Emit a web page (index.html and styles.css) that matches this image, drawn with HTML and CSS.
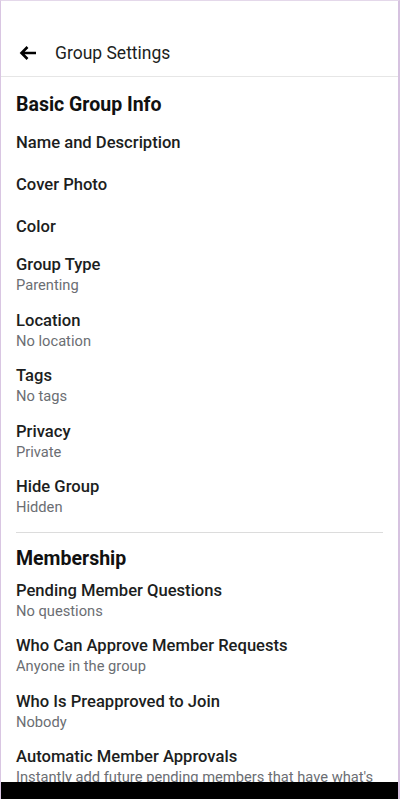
FILE: index.html
```html
<!DOCTYPE html>
<html>
<head>
<meta charset="utf-8">
<link rel="stylesheet" href="styles.css">
</head>
<body>
<div class="frame">
  <header class="topbar">
    <svg class="back" width="18" height="16" viewBox="0 0 18 16" aria-hidden="true">
      <path d="M17 8H3M8.5 2L2.5 8l6 6" fill="none" stroke="#000" stroke-width="2.6" stroke-linecap="butt" stroke-linejoin="miter"/>
    </svg>
    <span class="title">Group Settings</span>
  </header>
  <main class="content">
    <section class="section">
      <h2 class="heading">Basic Group Info</h2>
      <div class="item"><div class="label">Name and Description</div></div>
      <div class="item"><div class="label">Cover Photo</div></div>
      <div class="item"><div class="label">Color</div></div>
      <div class="item sub"><div class="label">Group Type</div><div class="value">Parenting</div></div>
      <div class="item sub"><div class="label">Location</div><div class="value">No location</div></div>
      <div class="item sub"><div class="label">Tags</div><div class="value">No tags</div></div>
      <div class="item sub"><div class="label">Privacy</div><div class="value">Private</div></div>
      <div class="item sub"><div class="label">Hide Group</div><div class="value">Hidden</div></div>
    </section>
    <hr class="divider">
    <section class="section">
      <h2 class="heading">Membership</h2>
      <div class="item sub"><div class="label">Pending Member Questions</div><div class="value">No questions</div></div>
      <div class="item sub"><div class="label">Who Can Approve Member Requests</div><div class="value">Anyone in the group</div></div>
      <div class="item sub"><div class="label">Who Is Preapproved to Join</div><div class="value">Nobody</div></div>
      <div class="item sub"><div class="label">Automatic Member Approvals</div><div class="value wrap">Instantly add future pending members that have what's needed</div></div>
    </section>
  </main>
  <div class="navbar"></div>
</div>
</body>
</html>
```
FILE: styles.css
```css
html, body {
  margin: 0;
  padding: 0;
  background: #fff;
}
.frame {
  position: relative;
  width: 400px;
  height: 799px;
  box-sizing: border-box;
  border-top: 1px solid #e4d8ea;
  border-left: 1px solid #d9c6e2;
  border-right: 2px solid #d6c2e0;
  overflow: hidden;
  font-family: Roboto, "Noto Sans", "Liberation Sans", sans-serif;
  color: #1c1e21;
  display: flex;
  flex-direction: column;
}
.topbar {
  display: flex;
  align-items: center;
  height: 76px;
  box-sizing: border-box;
  padding-top: 28px;
  padding-left: 18px;
  border-bottom: 1px solid #e6e6e6;
  flex-shrink: 0;
}
.back {
  display: block;
  flex-shrink: 0;
}
.title {
  margin-left: 18px;
  font-size: 17.5px;
  line-height: 24px;
  font-weight: 400;
  color: #1c1e21;
}
.content {
  flex: 1;
  overflow: hidden;
  padding: 0 15px;
}
.section {
  display: flex;
  flex-direction: column;
}
.heading {
  margin: 16px 0 4px;
  font-size: 19.5px;
  line-height: 24px;
  font-weight: 700;
  color: #111;
}
.item {
  padding: 10.5px 0;
}
.item.sub {
  padding: 7.25px 0;
}
.label {
  font-size: 16.6px;
  line-height: 21px;
  font-weight: 500;
  color: #1c1e21;
  white-space: nowrap;
}
.value {
  font-size: 14.7px;
  line-height: 20px;
  font-weight: 400;
  color: #6b6e73;
  white-space: nowrap;
}
.value.wrap {
  white-space: normal;
}
.divider {
  border: 0;
  border-top: 1px solid #dcdcdc;
  margin: 7px 0 0;
}
.section + .divider + .section .heading {
  margin-top: 14px;
  margin-bottom: 2px;
}
.navbar {
  position: absolute;
  left: -1px;
  right: -2px;
  bottom: 0;
  height: 17px;
  background: #000;
}
```
